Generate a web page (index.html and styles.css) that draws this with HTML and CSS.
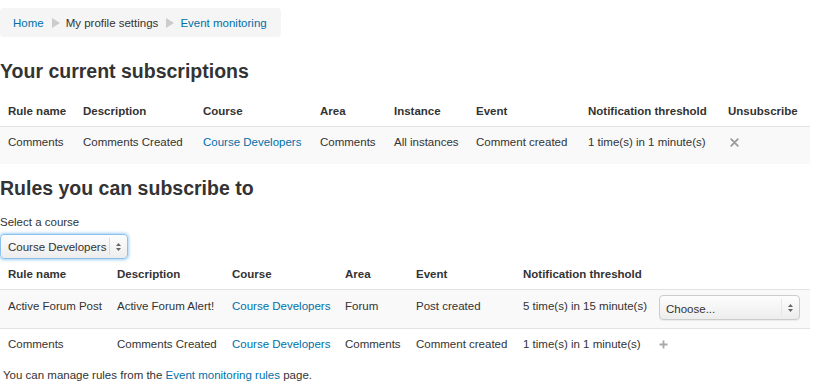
FILE: index.html
```html
<!DOCTYPE html>
<html>
<head>
<meta charset="utf-8">
<link rel="stylesheet" href="styles.css">
</head>
<body>
<nav class="breadcrumb">
  <a href="#">Home</a>
  <span class="sep"></span>
  <span>My profile settings</span>
  <span class="sep"></span>
  <a href="#">Event monitoring</a>
</nav>

<h2 class="title title-first">Your current subscriptions</h2>
<table class="gtable t1">
  <thead>
    <tr>
      <th class="c1">Rule name</th>
      <th class="c2">Description</th>
      <th class="c3">Course</th>
      <th class="c4">Area</th>
      <th class="c5">Instance</th>
      <th class="c6">Event</th>
      <th class="c7">Notification threshold</th>
      <th class="c8">Unsubscribe</th>
    </tr>
  </thead>
  <tbody>
    <tr class="odd">
      <td>Comments</td>
      <td>Comments Created</td>
      <td><a href="#">Course Developers</a></td>
      <td>Comments</td>
      <td>All instances</td>
      <td>Comment created</td>
      <td>1 time(s) in 1 minute(s)</td>
      <td><svg class="icon x-icon" width="9" height="9" viewBox="0 0 9 9"><path d="M1.2 1.2 L7.8 7.8 M7.8 1.2 L1.2 7.8" stroke="#9a9a9a" stroke-width="1.8" stroke-linecap="round"/></svg></td>
    </tr>
  </tbody>
</table>

<h2 class="title title-second">Rules you can subscribe to</h2>
<div class="label">Select a course</div>
<div class="select focus course-select">
  <span class="select-text">Course Developers</span>
  <span class="arrows"><svg width="7" height="10" viewBox="0 0 7 10"><path d="M3.5 1 L6 4 L1 4 Z M3.5 9 L6 6 L1 6 Z" fill="#666"/></svg></span>
</div>
<table class="gtable t2">
  <thead>
    <tr>
      <th class="d1">Rule name</th>
      <th class="d2">Description</th>
      <th class="d3">Course</th>
      <th class="d4">Area</th>
      <th class="d5">Event</th>
      <th class="d6">Notification threshold</th>
      <th class="d7"></th>
    </tr>
  </thead>
  <tbody>
    <tr class="odd">
      <td class="txt">Active Forum Post</td>
      <td class="txt">Active Forum Alert!</td>
      <td class="txt"><a href="#">Course Developers</a></td>
      <td class="txt">Forum</td>
      <td class="txt">Post created</td>
      <td class="txt">5 time(s) in 15 minute(s)</td>
      <td class="sel-cell">
        <div class="select choose-select">
          <span class="select-text">Choose...</span>
          <span class="arrows"><svg width="7" height="10" viewBox="0 0 7 10"><path d="M3.5 1 L6 4 L1 4 Z M3.5 9 L6 6 L1 6 Z" fill="#666"/></svg></span>
        </div>
      </td>
    </tr>
    <tr>
      <td>Comments</td>
      <td>Comments Created</td>
      <td><a href="#">Course Developers</a></td>
      <td>Comments</td>
      <td>Comment created</td>
      <td>1 time(s) in 1 minute(s)</td>
      <td><svg class="icon plus-icon" width="9" height="9" viewBox="0 0 9 9"><path d="M4.5 0.5 L4.5 8.5 M0.5 4.5 L8.5 4.5" stroke="#a8a8a8" stroke-width="1.8"/></svg></td>
    </tr>
  </tbody>
</table>
<p class="foot">You can manage rules from the <a href="#">Event monitoring rules</a> page.</p>
</body>
</html>
```

FILE: styles.css
```css
html, body {
  margin: 0;
  padding: 0;
  background: #fff;
}
body {
  font-family: "Liberation Sans", Arial, Helvetica, sans-serif;
  font-size: 11.5px;
  line-height: 14px;
  color: #333;
  padding-top: 8px;
  width: 810px;
}
a {
  color: #0070a8;
  text-decoration: none;
}
.breadcrumb {
  display: flex;
  align-items: center;
  width: 268px;
  height: 29px;
  padding: 0 0 0 13px;
  background: #f5f5f5;
  border-radius: 4px;
  box-sizing: content-box;
  white-space: nowrap;
}
.breadcrumb .sep {
  display: inline-block;
  width: 0;
  height: 0;
  border-left: 8px solid #ccc;
  border-top: 5px solid transparent;
  border-bottom: 5px solid transparent;
  margin: 0 6px 0 8px;
}
.title {
  font-size: 19.5px;
  font-weight: bold;
  line-height: 24px;
  margin: 0;
  color: #333;
}
.title-first {
  margin-top: 22px;
}
.title-second {
  margin-top: 12px;
}
.gtable {
  border-collapse: collapse;
  width: 810px;
  table-layout: fixed;
}
.gtable th, .gtable td {
  text-align: left;
  padding: 8px 8px;
  line-height: 14px;
  vertical-align: top;
  white-space: nowrap;
}
.gtable th {
  font-weight: bold;
}
.gtable tbody td {
  border-top: 1px solid #e3e3e3;
}
.gtable tr.odd td {
  background: #f9f9f9;
}
.t1 {
  margin-top: 13px;
}
.t1 tbody td {
  padding-bottom: 15px;
}
.c1 { width: 59px; }
.c2 { width: 104px; }
.c3 { width: 101px; }
.c4 { width: 58px; }
.c5 { width: 66px; }
.c6 { width: 96px; }
.c7 { width: 124px; }
.c8 { width: 74px; }
.d1 { width: 93px; }
.d2 { width: 99px; }
.d3 { width: 97px; }
.d4 { width: 55px; }
.d5 { width: 91px; }
.d6 { width: 120px; }
.d7 { width: 143px; }
.icon {
  display: block;
}
.x-icon {
  margin: 3px 0 0 2px;
}
.plus-icon {
  margin: 3px 0 0 0;
}
.label {
  margin-top: 15px;
}
.select {
  display: flex;
  align-items: center;
  height: 23px;
  border: 1px solid #ccc;
  border-radius: 4px;
  background: linear-gradient(#fdfdfd, #ededed);
  box-sizing: content-box;
  white-space: nowrap;
  line-height: 14px;
}
.select .select-text {
  flex: 1;
  padding-left: 7px;
}
.select .arrows {
  display: flex;
  align-items: center;
  justify-content: center;
  width: 17px;
  height: 17px;
  border-left: 1px solid #ddd;
}
.course-select {
  width: 126px;
  margin-top: 5px;
}
.focus {
  border-color: #8ec1ea;
  box-shadow: 0 0 3px 1px rgba(82, 168, 236, 0.55);
}
.choose-select {
  width: 139px;
  box-shadow: 0 1px 1px rgba(0, 0, 0, 0.06);
}
.choose-select .arrows {
  border-left-color: #e6e6e6;
}
.gtable td.txt {
  padding-top: 9px;
}
.gtable td.sel-cell {
  padding-top: 5px;
  padding-bottom: 8px;
}
.choose-select .select-text {
  padding-left: 6px;
  padding-top: 2px;
}
.foot {
  margin: 9px 0 0 3px;
}
```
